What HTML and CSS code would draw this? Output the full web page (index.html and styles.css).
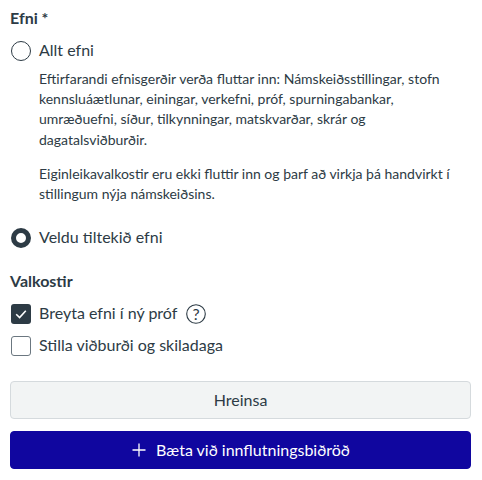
FILE: index.html
```html
<!DOCTYPE html>
<html lang="is">
<head>
<meta charset="utf-8">
<title>Efni</title>
<link rel="stylesheet" href="styles.css">
</head>
<body>
<form class="form">
  <div class="group-label">Efni *</div>
  <div class="radio-row first">
    <span class="radio"></span>
    <span class="option">Allt efni</span>
  </div>
  <div class="desc">
    <p>Eftirfarandi efnisgerðir verða fluttar inn: Námskeiðsstillingar, stofn kennsluáætlunar, einingar, verkefni, próf, spurningabankar, umræðuefni, síður, tilkynningar, matskvarðar, skrár og dagatalsviðburðir.</p>
    <p>Eiginleikavalkostir eru ekki fluttir inn og þarf að virkja þá handvirkt í stillingum nýja námskeiðsins.</p>
  </div>
  <div class="radio-row second">
    <span class="radio checked"></span>
    <span class="option">Veldu tiltekið efni</span>
  </div>
  <div class="group-label options">Valkostir</div>
  <div class="check-row">
    <span class="check checked">
      <svg viewBox="0 0 20 20" width="20" height="20"><path d="M5.2 10.2l3.4 3.3 6.2-6.8" fill="none" stroke="#fff" stroke-width="1.6"/></svg>
    </span>
    <span class="option">Breyta efni í ný próf</span>
    <svg class="help" viewBox="0 0 20 20" width="20" height="20"><circle cx="10" cy="10" r="9.3" fill="none" stroke="#2d3b45" stroke-width="1.1"/><text x="10" y="15.5" text-anchor="middle" class="help-mark">?</text></svg>
  </div>
  <div class="check-row">
    <span class="check"></span>
    <span class="option">Stilla viðburði og skiladaga</span>
  </div>
  <button type="button" class="btn secondary"><span class="btn-text">Hreinsa</span></button>
  <button type="button" class="btn primary">
    <svg viewBox="0 0 16 16" width="16" height="16"><path d="M8 1.5v13M1.5 8h13" stroke="#fff" stroke-width="1.3" fill="none"/></svg>
    <span class="btn-text">Bæta við innflutningsbiðröð</span>
  </button>
</form>
</body>
</html>
```
FILE: styles.css
```css
* { box-sizing: border-box; }
html, body { margin: 0; background: #fff; }
body {
  font-family: Lato, "Liberation Sans", sans-serif;
  color: #2d3b45;
  width: 482px;
  height: 480px;
  overflow: hidden;
}
.form { padding: 6px 11px 0 10px; display: flex; flex-direction: column; }
.group-label { font-size: 16px; font-weight: 700; line-height: 24px; }
.radio-row { display: flex; align-items: center; gap: 8px; height: 24px; padding-left: 1px; }
.radio-row.first { margin-top: 9px; }
.radio-row.second { margin-top: 21.8px; }
.radio { width: 20px; height: 20px; border-radius: 50%; border: 1px solid #2d3b45; background: #fff; flex: none; }
.radio.checked { border: 5px solid #2d3b45; }
.option { font-size: 16px; line-height: 24px; margin-bottom: 2px; }
.desc { margin: 6px 0 0 29px; font-size: 14px; line-height: 20.2px; }
.desc p { margin: 0; }
.desc p + p { margin-top: 14px; }
.group-label.options { margin-top: 19px; }
.check-row { display: flex; align-items: center; height: 24px; margin-top: 9px; }
.check-row + .check-row { margin-top: 8px; }
.check-row .option { margin-left: 8px; }
.check { width: 20px; height: 20px; border-radius: 3px; border: 1px solid #6b7780; background: #fff; flex: none; margin-left: 1px; }
.check.checked { background: #2d3b45; border: 0; }
.check svg { display: block; }
.help { margin-left: 9px; }
.help-mark { font-family: Lato, sans-serif; font-size: 16px; fill: #2d3b45; }
.btn {
  font-family: inherit;
  font-size: 16px;
  width: 461px;
  height: 38px;
  border-radius: 4px;
  display: flex;
  align-items: center;
  justify-content: center;
  padding: 0;
}
.btn-text { margin-bottom: 2px; }
.secondary { margin-top: 23px; background: #f2f4f4; border: 1px solid #d5dadd; color: #2d3b45; }
.primary { margin-top: 12px; background: #10069f; border: 1px solid #10069f; color: #fff; gap: 9px; }
.primary svg { display: block; }
```
